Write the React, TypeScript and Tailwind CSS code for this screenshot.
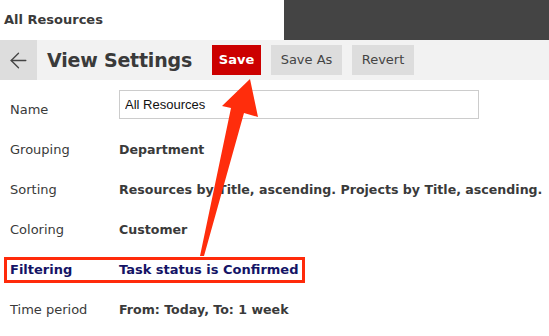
import { ArrowLeft } from "lucide-react";

const rows = [
  { label: "Grouping", value: "Department" },
  { label: "Sorting", value: "Resources by Title, ascending. Projects by Title, ascending." },
  { label: "Coloring", value: "Customer" },
  { label: "Filtering", value: "Task status is Confirmed", highlight: true },
  { label: "Time period", value: "From: Today, To: 1 week" },
];

export default function App() {
  return (
    <main
      className="relative w-[549px] h-[336px] overflow-hidden bg-white text-[#3a3a3a]"
      style={{ fontFamily: '"DejaVu Sans", Verdana, sans-serif' }}
    >
      {/* Top bar */}
      <div className="flex h-10">
        <div className="w-[284px] flex items-center pl-1 text-[13px] font-bold text-[#3a3a3a]">
          All Resources
        </div>
        <div className="flex-1 bg-[#444444]" />
      </div>

      {/* Title bar */}
      <div className="flex items-center h-10 bg-[#f2f2f2]">
        <button className="w-[37px] h-10 flex items-center justify-center bg-[#dddddd] text-[#444]">
          <ArrowLeft size={25} strokeWidth={1.3} />
        </button>
        <h1 className="ml-[10px] w-[165px] text-[19px] font-bold tracking-[-0.2px] text-[#3a3a3a]">
          View Settings
        </h1>
        <button className="w-[49px] h-[30px] bg-[#cc0000] text-white text-[13px] font-bold">
          Save
        </button>
        <button className="ml-[10px] w-[71px] h-[30px] bg-[#dddddd] text-[#444] text-[13px]">
          Save As
        </button>
        <button className="ml-[10px] w-[62px] h-[30px] bg-[#dddddd] text-[#444] text-[13px]">
          Revert
        </button>
      </div>

      {/* Settings */}
      <div className="pt-[10px] text-[13px]">
        <div className="flex h-10">
          <div className="w-[119px] pl-[10px] flex items-center">Name</div>
          <input
            className="w-[360px] h-[29px] border border-[#cccccc] px-[5px] text-[13px] text-[#111] outline-none"
            style={{ fontFamily: '"Liberation Sans", Arial, sans-serif' }}
            defaultValue="All Resources"
          />
        </div>
        {rows.map((row) => (
          <div key={row.label} className="relative flex items-center h-10 whitespace-nowrap">
            <div
              className={
                row.highlight
                  ? "w-[119px] shrink-0 pl-[10px] font-bold text-[#141466]"
                  : "w-[119px] shrink-0 pl-[10px]"
              }
            >
              {row.label}
            </div>
            <div
              className={
                row.highlight
                  ? "text-[13px] font-bold text-[#141466]"
                  : "text-[12.6px] font-bold text-[#3a3a3a]"
              }
            >
              {row.value}
            </div>
            {row.highlight && (
              <div className="absolute left-[4px] top-[7px] w-[301px] h-[26px] border-[3px] border-[#ff2a0a]" />
            )}
          </div>
        ))}
      </div>

      {/* Annotation arrow */}
      <svg className="absolute inset-0 pointer-events-none" width="549" height="336">
        <polygon
          points="250,79 258,117 244,113 204,256 200,256 231,108 222,106"
          fill="#ff2d0c"
        />
      </svg>
    </main>
  );
}
